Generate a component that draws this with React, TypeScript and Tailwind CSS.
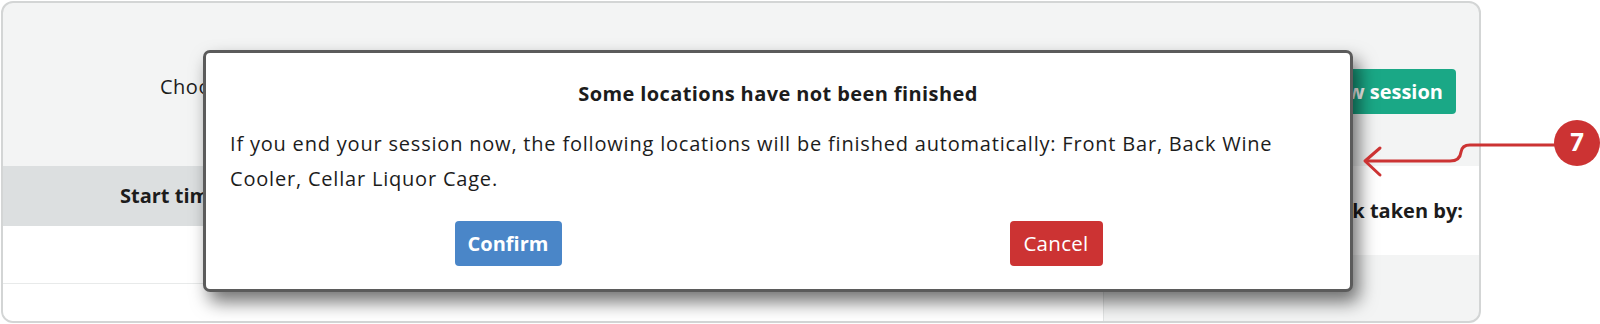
import React from 'react';

const font = { fontFamily: '"Open Sans", Lato, sans-serif' };

function Annotation() {
  return (
    <svg className="absolute left-0 top-0" width={1600} height={324} viewBox="0 0 1600 324">
      <path
        d="M1555 145 H1470 Q1462 145 1461 152 Q1460 161 1450 161 H1366"
        fill="none"
        stroke="#cc3333"
        strokeWidth={3}
        strokeLinecap="round"
      />
      <path d="M1380 148 L1365 161 L1380 175" fill="none" stroke="#cc3333" strokeWidth={3} strokeLinecap="round" strokeLinejoin="round" />
      <circle cx={1577} cy={143} r={23} fill="#cc3333" />
      <text x={1577} y={151} textAnchor="middle" fill="#fff" fontSize={24} fontWeight={800} fontFamily="Lato, sans-serif">
        7
      </text>
    </svg>
  );
}

function ConfirmModal() {
  return (
    <div className="absolute left-[203px] top-[50px] flex h-[242px] w-[1150px] flex-col rounded-[7px] border-[3px] border-[#5b5b5b] bg-white px-[24px] shadow-[6px_10px_18px_rgba(0,0,0,0.55)]">
      <h2 className="mt-[27px] text-center text-[20px] font-bold leading-[28px] tracking-[0.4px] text-[#1c1c1c]">
        Some locations have not been finished
      </h2>
      <p className="mt-[18px] text-[20px] leading-[35px] tracking-[0.8px] text-[#1c1c1c]">
        If you end your session now, the following locations will be finished automatically: Front Bar, Back Wine
        <br />
        Cooler, Cellar Liquor Cage.
      </p>
      <div className="-mr-[4px] ml-[4px] mt-[25px] grid grid-cols-2">
        <div className="flex justify-center">
          <button className="h-[45px] w-[107px] rounded-[4px] bg-[#4a86c8] text-[20px] font-bold text-white">Confirm</button>
        </div>
        <div className="flex justify-center">
          <button className="h-[45px] w-[93px] rounded-[4px] bg-[#cc3333] text-[20.5px] tracking-[0.3px] text-white">Cancel</button>
        </div>
      </div>
    </div>
  );
}

export default function App() {
  return (
    <div className="relative h-[324px] w-[1600px] overflow-hidden bg-white" style={font}>
      <div className="ml-px mt-px flex h-[322px] w-[1480px] flex-col overflow-hidden rounded-[12px] border-2 border-[#d3d5d5] bg-[#f3f4f4]">
        {/* top bar */}
        <div className="flex h-[163px] items-start justify-between pl-[157px] pr-[23px]">
          <span className="mt-[69px] text-[20px] tracking-[0.5px] text-[#1c1c1c]">Choose a location to count:</span>
          <button className="mt-[66px] h-[45px] rounded-[4px] bg-[#1aa886] px-[13px] text-[20px] font-bold text-white">
            Start new session
          </button>
        </div>
        {/* table + side panel */}
        <div className="flex flex-1">
          <div className="flex w-[1101px] flex-col border-r border-[#e2e4e4] bg-white">
            <div className="flex h-[60px] items-center bg-[#dcdfe0] pl-[117px] text-[20px] font-bold text-[#1c1c1c]">
              <span>Start time</span>
            </div>
            <div className="h-[58px] border-b border-[#e8eaea]" />
            <div className="flex-1" />
          </div>
          <div className="flex flex-1 flex-col">
            <div className="flex h-[89px] items-center justify-end bg-white pr-[16px] text-[20px] font-bold text-[#1c1c1c]">
              Stock taken by:
            </div>
          </div>
        </div>
      </div>
      <ConfirmModal />
      <Annotation />
    </div>
  );
}
